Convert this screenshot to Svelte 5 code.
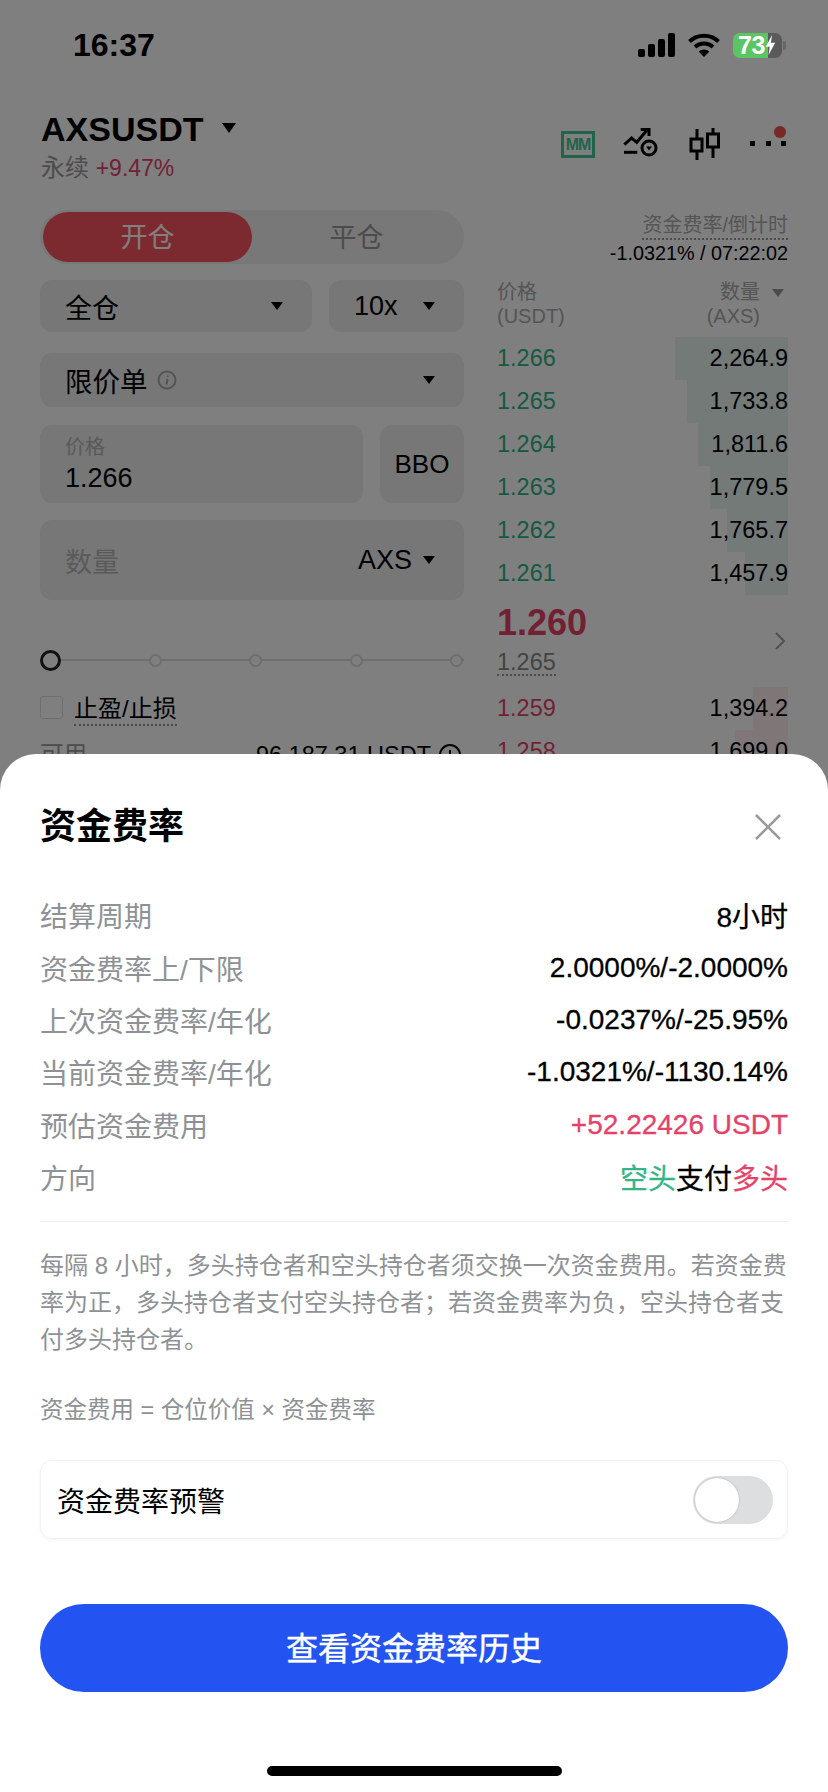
<script>
  const asks = [
    { price: '1.266', qty: '2,264.9', depth: 113 },
    { price: '1.265', qty: '1,733.8', depth: 101 },
    { price: '1.264', qty: '1,811.6', depth: 90 },
    { price: '1.263', qty: '1,779.5', depth: 78 },
    { price: '1.262', qty: '1,765.7', depth: 61 },
    { price: '1.261', qty: '1,457.9', depth: 43 },
  ]
  const bids = [
    { price: '1.259', qty: '1,394.2', depth: 35 },
    { price: '1.258', qty: '1,699.0', depth: 53 },
  ]
  const rates = [
    { label: '结算周期', value: '8小时' },
    { label: '资金费率上/下限', value: '2.0000%/-2.0000%' },
    { label: '上次资金费率/年化', value: '-0.0237%/-25.95%' },
    { label: '当前资金费率/年化', value: '-1.0321%/-1130.14%' },
    { label: '预估资金费用', value: '+52.22426 USDT', red: true },
  ]
</script>

<div class="page">
  <div class="status">
    <span class="time">16:37</span>
    <div class="status-icons">
      <svg class="cell" width="37" height="24" viewBox="0 0 37 24">
        <rect x="0" y="16" width="7" height="8" rx="2" />
        <rect x="10" y="11" width="7" height="13" rx="2" />
        <rect x="20" y="6" width="7" height="18" rx="2" />
        <rect x="30" y="0" width="7" height="24" rx="2" />
      </svg>
      <svg class="wifi" width="32" height="24" viewBox="0 0 32 24">
        <path d="M1.5 8.5C9.5 .8 22.5 .8 30.5 8.5" fill="none" stroke="#000" stroke-width="4" />
        <path d="M7 14C12 9.2 20 9.2 25 14" fill="none" stroke="#000" stroke-width="4" />
        <path d="M16 24 10.6 18.6C13.6 15.8 18.4 15.8 21.4 18.6Z" />
      </svg>
      <div class="battery">
        <span class="level">73</span>
        <svg class="bolt" width="11" height="20" viewBox="0 0 14 22" preserveAspectRatio="none">
          <path d="M9 0 1 13H6L4.5 22 13 8.5H7.5Z" fill="#fff" />
        </svg>
      </div>
      <span class="nub"></span>
    </div>
  </div>

  <header class="head">
    <div>
      <div class="symbol">
        <h1>AXSUSDT</h1>
        <i class="caret big"></i>
      </div>
      <div class="sub">永续 <span class="red">+9.47%</span></div>
    </div>
    <div class="tools">
      <span class="mm">MM</span>
      <svg width="40" height="32" viewBox="0 0 40 32" fill="none" stroke="#000" stroke-width="3">
        <path d="M2.3 16.7 9.7 10 14.7 14.3 25.3 1.7" />
        <path d="M18.7 1.5H27V8" />
        <path d="M2 24.3H15.3" />
        <circle cx="27" cy="20" r="7" />
        <path d="M24 18.5H30L27 22.5Z" fill="#000" stroke="none" />
      </svg>
      <svg width="32" height="32" viewBox="0 0 32 32" fill="none" stroke="#000" stroke-width="3">
        <path d="M8 1V11M8 23V32" />
        <rect x="2" y="11" width="11" height="12" />
        <path d="M24 0V6M24 19V30" />
        <rect x="18.500" y="6" width="11" height="13" />
      </svg>
      <svg class="more" width="40" height="32" viewBox="0 0 40 32">
        <rect x="2" y="13" width="5" height="5" />
        <rect x="18" y="13" width="5" height="5" />
        <rect x="33" y="13" width="5" height="5" />
        <circle cx="32" cy="4" r="6" fill="#f0514f" />
      </svg>
    </div>
  </header>

  <main class="trade">
    <section class="form">
      <div class="tabs">
        <button class="tab on" type="button">开仓</button>
        <button class="tab" type="button">平仓</button>
      </div>

      <div class="line first">
        <div class="field margin"><span>全仓</span><i class="caret"></i></div>
        <div class="field lever"><span>10x</span><i class="caret"></i></div>
      </div>

      <div class="field order">
        <span class="order-name">限价单
          <svg width="20" height="20" viewBox="0 0 20 20" fill="none" stroke="#a9a9a9" stroke-width="2">
            <circle cx="10" cy="10" r="8.500" />
            <path d="M10.500 9 9.500 14.500M10.700 5.500V6.800" />
          </svg>
        </span>
        <i class="caret"></i>
      </div>

      <div class="line price-line">
        <div class="field price">
          <small>价格</small>
          <span>1.266</span>
        </div>
        <div class="field bbo">BBO</div>
      </div>

      <div class="field amount">
        <span class="hint">数量</span>
        <span class="unit">AXS <i class="caret"></i></span>
      </div>

      <div class="slider">
        <span class="thumb"></span>
        <span class="node"></span>
        <span class="node"></span>
        <span class="node"></span>
        <span class="node"></span>
      </div>

      <div class="tpsl">
        <span class="check"></span>
        <span class="dotted">止盈/止损</span>
      </div>

      <div class="avail">
        <span class="muted">可用</span>
        <span class="avail-val">96,187.31 USDT
          <svg width="22" height="22" viewBox="0 0 22 22" fill="none" stroke="#000" stroke-width="2">
            <circle cx="11" cy="11" r="10" />
            <path d="M11 6V16M6 11H16" />
          </svg>
        </span>
      </div>
    </section>

    <section class="book">
      <div class="funding">
        <span class="dotted funding-label">资金费率/倒计时</span>
        <span class="funding-val">-1.0321% / 07:22:02</span>
      </div>

      <div class="book-head">
        <div>价格<br />(USDT)</div>
        <div class="qty-head">
          <div>数量<br />(AXS)</div>
          <i class="caret small"></i>
        </div>
      </div>

      {#each asks as row}
        <div class="row">
          <span class="bar green-bar" style="width:{row.depth}px"></span>
          <span class="px green">{row.price}</span>
          <span class="qty">{row.qty}</span>
        </div>
      {/each}

      <div class="mid">
        <div>
          <div class="last">1.260</div>
          <span class="dotted mark">1.265</span>
        </div>
        <svg width="12" height="20" viewBox="0 0 12 20" fill="none" stroke="#a0a0a0" stroke-width="2">
          <path d="M2 2 10 10 2 18" />
        </svg>
      </div>

      {#each bids as row}
        <div class="row">
          <span class="bar red-bar" style="width:{row.depth}px"></span>
          <span class="px red">{row.price}</span>
          <span class="qty">{row.qty}</span>
        </div>
      {/each}
    </section>
  </main>

  <div class="backdrop"></div>

  <div class="sheet">
    <div class="sheet-head">
      <h2>资金费率</h2>
      <svg width="28" height="28" viewBox="0 0 28 28" fill="none" stroke="#9a9a9a" stroke-width="2.500">
        <path d="M2 2 26 26M26 2 2 26" />
      </svg>
    </div>

    <div class="rates">
      {#each rates as rate}
        <div class="rate">
          <span class="rate-label">{rate.label}</span>
          <span class="rate-val" class:pink={rate.red}>{rate.value}</span>
        </div>
      {/each}
      <div class="rate">
        <span class="rate-label">方向</span>
        <span class="rate-val"><span class="mint">空头</span>支付<span class="pink">多头</span></span>
      </div>
    </div>

    <div class="rule"></div>

    <p class="note">每隔 8 小时，多头持仓者和空头持仓者须交换一次资金费用。若资金费率为正，多头持仓者支付空头持仓者；若资金费率为负，空头持仓者支付多头持仓者。</p>
    <p class="formula">资金费用 = 仓位价值 × 资金费率</p>

    <div class="alert">
      <span>资金费率预警</span>
      <span class="switch"><span class="knob"></span></span>
    </div>

    <button class="history" type="button">查看资金费率历史</button>

    <div class="home"></div>
  </div>
</div>

<style>
  :global(body) {
    margin: 0;
    background: #fff;
  }
  * {
    box-sizing: border-box;
  }
  .page {
    position: relative;
    width: 828px;
    height: 1792px;
    overflow: hidden;
    background: #fff;
    color: #000;
    font-family: "Liberation Sans", "Noto Sans CJK SC", sans-serif;
  }
  .status {
    position: relative;
    z-index: 3;
    height: 90px;
    padding: 0 42px 0 73px;
    display: flex;
    align-items: center;
    justify-content: space-between;
  }
  .time {
    font-size: 32px;
    font-weight: 700;
  }
  .status-icons {
    display: flex;
    align-items: center;
  }
  .wifi {
    margin-left: 13px;
  }
  .battery {
    margin-left: 13px;
    width: 49px;
    height: 25px;
    border-radius: 7px;
    background: linear-gradient(90deg, #5cc563 72%, #5a5a5a 72%);
    display: flex;
    align-items: center;
    padding-left: 5px;
    color: #fff;
    font-size: 25px;
    font-weight: 700;
  }
  .level {
    letter-spacing: -0.5px;
  }
  .nub {
    width: 3px;
    height: 9px;
    margin-left: 1px;
    border-radius: 0 2px 2px 0;
    background: #666;
  }

  .head {
    margin-top: 19px;
    padding: 0 40px 0 41px;
    display: flex;
    justify-content: space-between;
  }
  .symbol {
    height: 40px;
    display: flex;
    align-items: center;
  }
  h1 {
    margin: 0;
    font-size: 34px;
    font-weight: 700;
    line-height: 40px;
  }
  .caret {
    display: inline-block;
    width: 0;
    height: 0;
    border-left: 6px solid transparent;
    border-right: 6px solid transparent;
    border-top: 8px solid #000;
  }
  .caret.big {
    margin: 0 0 2px 19px;
    border-left-width: 7px;
    border-right-width: 7px;
    border-top-width: 10px;
  }
  .caret.small {
    border-top-color: #999;
    margin-top: 9px;
  }
  .sub {
    margin-top: 4px;
    line-height: 30px;
    font-size: 24px;
    color: #999;
  }
  .sub .red {
    font-size: 23px;
  }
  .red {
    color: #e5426a;
  }
  .green {
    color: #2cb384;
  }
  .tools {
    margin-top: 19px;
    display: flex;
    gap: 27px;
    align-items: center;
    height: 32px;
  }
  .more {
    overflow: visible;
  }
  .mm {
    width: 34px;
    height: 27px;
    border: 3px solid #45c695;
    color: #45c695;
    font-size: 16px;
    font-weight: 700;
    line-height: 21px;
    letter-spacing: -1px;
    text-align: center;
  }

  .trade {
    margin-top: 27px;
    padding: 0 40px;
    display: flex;
    gap: 33px;
  }
  .form {
    width: 424px;
    flex: none;
  }
  .tabs {
    height: 54px;
    padding: 2px 3px;
    display: flex;
    border-radius: 27px;
    background: #f1f1f1;
  }
  .tab {
    flex: 1;
    border: 0;
    padding: 0 0 4px;
    border-radius: 25px;
    background: none;
    color: #999;
    font: inherit;
    font-size: 27px;
  }
  .tab.on {
    background: #fb5360;
    color: #fff;
  }
  .line {
    display: flex;
    gap: 17px;
  }
  .line.first {
    margin-top: 16px;
  }
  .field {
    border-radius: 12px;
    background: #eeeeee;
    font-size: 27px;
    display: flex;
    align-items: center;
    justify-content: space-between;
    padding: 0 29px 0 25px;
  }
  .margin {
    flex: 1;
    height: 52px;
  }
  .lever {
    width: 135px;
    height: 52px;
    padding-left: 25px;
  }
  .order {
    margin-top: 21px;
    height: 54px;
  }
  .order-name {
    display: flex;
    align-items: center;
    gap: 9px;
    font-size: 27.500px;
  }
  .price-line {
    margin-top: 18px;
  }
  .price {
    flex: 1;
    height: 78px;
    flex-direction: column;
    align-items: flex-start;
    justify-content: center;
    gap: 4px;
  }
  .price small {
    font-size: 20px;
    line-height: 24px;
    color: #b4b4b4;
  }
  .price span {
    line-height: 30px;
  }
  .bbo {
    width: 84px;
    height: 78px;
    padding: 0;
    justify-content: center;
    font-size: 26px;
  }
  .amount {
    margin-top: 17px;
    height: 80px;
  }
  .hint {
    color: #b4b4b4;
  }
  .unit {
    display: flex;
    align-items: center;
    gap: 11px;
  }
  .slider {
    margin-top: 49px;
    height: 22px;
    display: flex;
    align-items: center;
    justify-content: space-between;
    background: linear-gradient(#dcdcdc, #dcdcdc) center / 100% 2px no-repeat;
    padding-right: 1px;
  }
  .thumb {
    width: 21px;
    height: 21px;
    border: 3.500px solid #222;
    border-radius: 50%;
    background: #fff;
  }
  .node {
    width: 13px;
    height: 13px;
    border: 2px solid #dcdcdc;
    border-radius: 50%;
    background: #fff;
  }
  .tpsl {
    margin-top: 24px;
    height: 24px;
    display: flex;
    align-items: center;
    gap: 11px;
    font-size: 24px;
  }
  .check {
    width: 23px;
    height: 23px;
    border: 1.500px solid #ddd;
    border-radius: 3px;
  }
  .dotted {
    border-bottom: 2px dotted #999;
  }
  .avail {
    margin-top: 21px;
    display: flex;
    justify-content: space-between;
    font-size: 23.500px;
    line-height: 30px;
  }
  .muted {
    color: #999;
  }
  .avail-val {
    display: flex;
    align-items: center;
    gap: 8px;
    padding-right: 3px;
  }

  .book {
    flex: 1;
    min-width: 0;
  }
  .funding {
    display: flex;
    flex-direction: column;
    align-items: flex-end;
    padding-top: 2px;
    font-size: 20px;
    height: 54px;
  }
  .funding-label {
    color: #aaa;
    line-height: 26px;
  }
  .funding-val {
    font-size: 19.800px;
    line-height: 27px;
  }
  .book-head {
    margin-top: 16px;
    height: 57px;
    display: flex;
    justify-content: space-between;
    font-size: 20px;
    line-height: 24px;
    color: #aaa;
  }
  .qty-head {
    display: flex;
    gap: 12px;
    padding-right: 4px;
    text-align: right;
  }
  .row {
    position: relative;
    height: 43px;
    display: flex;
    align-items: center;
    justify-content: space-between;
    font-size: 23.500px;
  }
  .bar {
    position: absolute;
    top: 0;
    right: 0;
    bottom: 0;
  }
  .green-bar {
    background: #e8f5f0;
  }
  .red-bar {
    background: #fcecef;
  }
  .px,
  .qty {
    position: relative;
  }
  .mid {
    height: 92px;
    padding: 7px 2px 0 0;
    display: flex;
    align-items: flex-start;
    justify-content: space-between;
  }
  .mid svg {
    margin-top: 29px;
  }
  .last {
    font-size: 36px;
    font-weight: 700;
    line-height: 42px;
    color: #e5426a;
  }
  .mark {
    display: inline-block;
    margin-top: 6px;
    font-size: 23.500px;
    line-height: 24px;
    color: #888;
  }

  .backdrop {
    position: absolute;
    inset: 0;
    z-index: 1;
    background: rgba(0, 0, 0, 0.5);
  }
  .sheet {
    position: absolute;
    left: 0;
    right: 0;
    top: 754px;
    bottom: 0;
    z-index: 2;
    padding: 48px 40px 0;
    border-radius: 36px 36px 0 0;
    background: #fff;
  }
  .sheet-head {
    height: 50px;
    display: flex;
    align-items: center;
    justify-content: space-between;
    padding-right: 6px;
  }
  h2 {
    margin: 0;
    font-size: 36px;
    font-weight: 700;
    line-height: 50px;
  }
  .rates {
    margin-top: 37px;
  }
  .rate {
    height: 52.400px;
    display: flex;
    align-items: center;
    justify-content: space-between;
    font-size: 28px;
  }
  .rate-label {
    color: #8e9296;
  }
  .rate-val {
    -webkit-text-stroke: 0.3px currentColor;
  }
  .pink {
    color: #e5426a;
  }
  .mint {
    color: #35b587;
  }
  .rule {
    margin-top: 18px;
    height: 1px;
    background: #f0f0f0;
  }
  .note {
    margin: 26px 0 0;
    font-size: 24px;
    line-height: 36.700px;
    color: #8e9296;
  }
  .formula {
    margin: 34px 0 0;
    font-size: 23.500px;
    line-height: 36px;
    color: #8e9296;
  }
  .alert {
    margin-top: 32px;
    height: 79px;
    padding: 0 14px 0 16px;
    border: 1px solid #f2f2f2;
    border-radius: 12px;
    box-shadow: 0 1px 3px rgba(0, 0, 0, 0.05);
    display: flex;
    align-items: center;
    justify-content: space-between;
    font-size: 28px;
  }
  .switch {
    width: 80px;
    height: 48px;
    border-radius: 24px;
    background: #dcdee0;
    padding: 2px;
  }
  .knob {
    display: block;
    width: 44px;
    height: 44px;
    border-radius: 50%;
    background: #fff;
    box-shadow: 0 0 2px rgba(0, 0, 0, 0.25);
  }
  .history {
    display: block;
    margin-top: 65px;
    width: 100%;
    height: 88px;
    border: 0;
    padding: 0 0 4px;
    border-radius: 44px;
    background: #2354f2;
    color: #fff;
    font: inherit;
    font-size: 32px;
    -webkit-text-stroke: 0.4px #fff;
  }
  .home {
    margin: 74px auto 0;
    width: 295px;
    height: 10px;
    border-radius: 5px;
    background: #000;
  }
</style>
